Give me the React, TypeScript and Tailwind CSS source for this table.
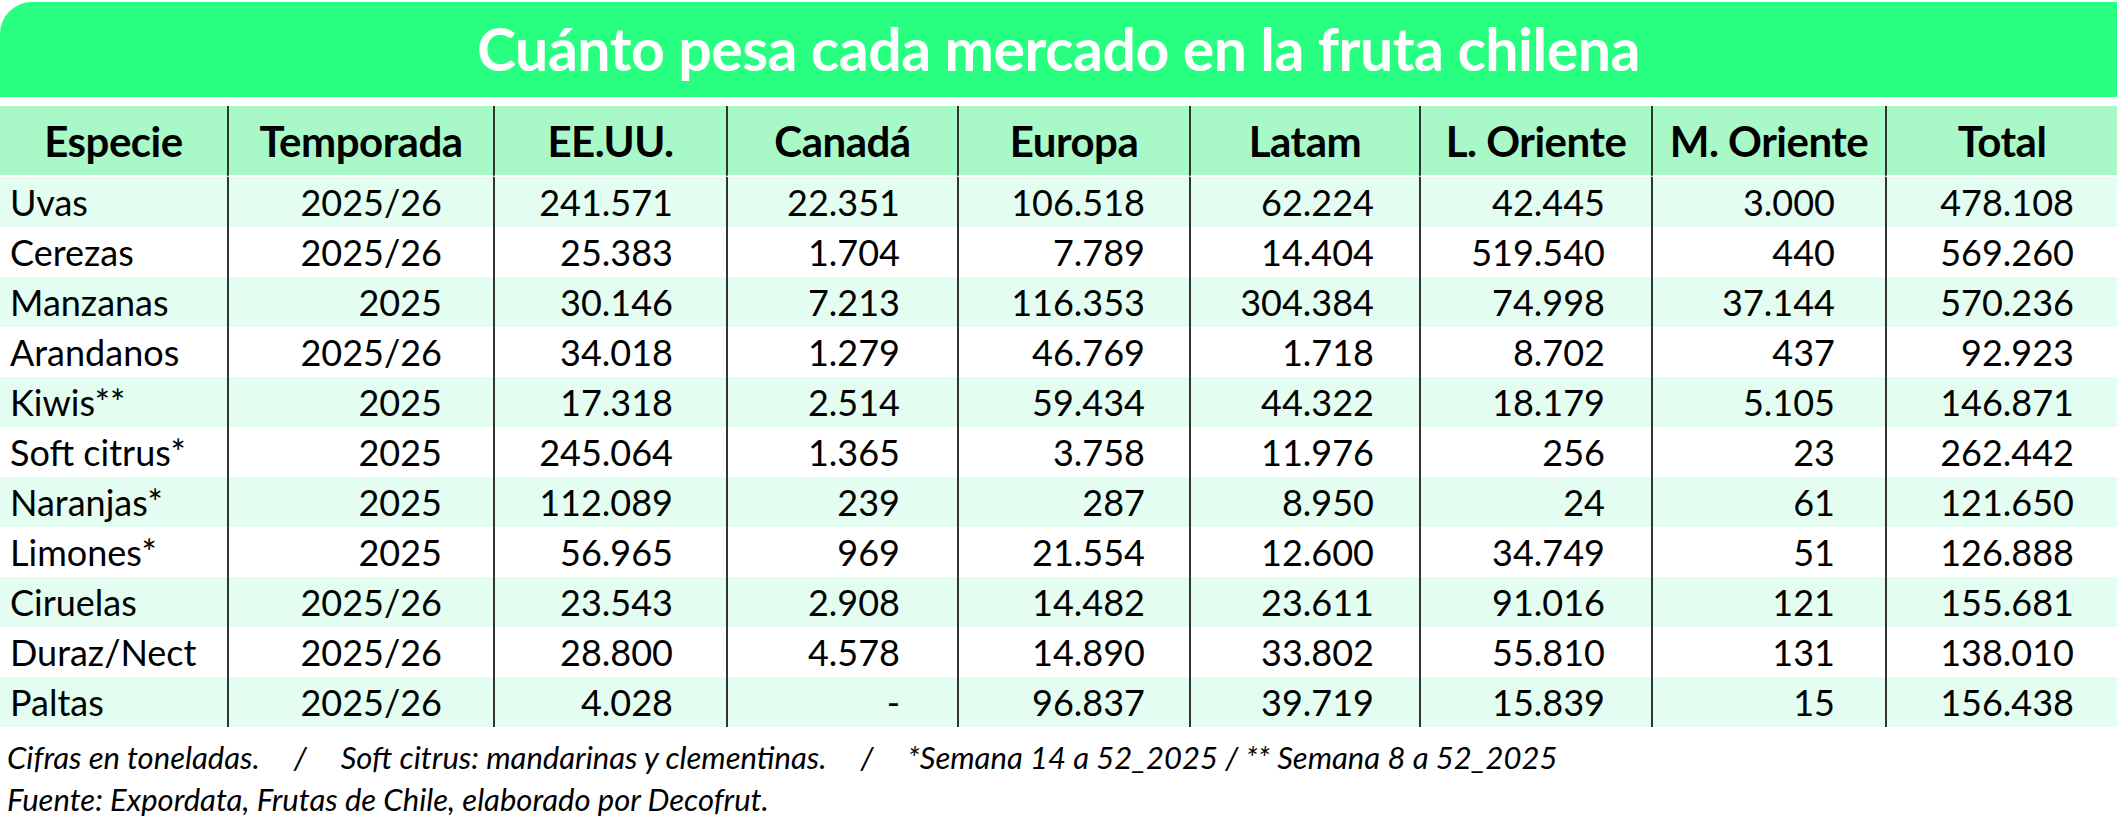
import React from "react";

const headers = ["Especie", "Temporada", "EE.UU.", "Canadá", "Europa", "Latam", "L. Oriente", "M. Oriente", "Total"];

const rows: string[][] = [
  ["Uvas", "2025/26", "241.571", "22.351", "106.518", "62.224", "42.445", "3.000", "478.108"],
  ["Cerezas", "2025/26", "25.383", "1.704", "7.789", "14.404", "519.540", "440", "569.260"],
  ["Manzanas", "2025", "30.146", "7.213", "116.353", "304.384", "74.998", "37.144", "570.236"],
  ["Arandanos", "2025/26", "34.018", "1.279", "46.769", "1.718", "8.702", "437", "92.923"],
  ["Kiwis**", "2025", "17.318", "2.514", "59.434", "44.322", "18.179", "5.105", "146.871"],
  ["Soft citrus*", "2025", "245.064", "1.365", "3.758", "11.976", "256", "23", "262.442"],
  ["Naranjas*", "2025", "112.089", "239", "287", "8.950", "24", "61", "121.650"],
  ["Limones*", "2025", "56.965", "969", "21.554", "12.600", "34.749", "51", "126.888"],
  ["Ciruelas", "2025/26", "23.543", "2.908", "14.482", "23.611", "91.016", "121", "155.681"],
  ["Duraz/Nect", "2025/26", "28.800", "4.578", "14.890", "33.802", "55.810", "131", "138.010"],
  ["Paltas", "2025/26", "4.028", "-", "96.837", "39.719", "15.839", "15", "156.438"],
];

const padR = [
  "pl-[10px] justify-start",
  "pr-[51px] justify-end",
  "pr-[53px] justify-end",
  "pr-[57px] justify-end",
  "pr-[44px] justify-end",
  "pr-[45px] justify-end",
  "pr-[46px] justify-end",
  "pr-[50px] justify-end",
  "pr-[43px] justify-end",
];

export default function App() {
  return (
    <div className="w-[2119px] h-[818px] bg-white text-black font-['Lato',sans-serif] overflow-hidden">
      <div className="w-[2117px] pt-[2px]">
        <div className="h-[95px] bg-[#28fe80] rounded-tl-[32px] flex items-center justify-center">
          <h1 className="text-white font-bold text-[59px] leading-none tracking-[-0.5px] pb-[2px]">
            Cuánto pesa cada mercado en la fruta chilena
          </h1>
        </div>
        <div className="h-[9px]" />
        <div className="grid grid-cols-[227px_266px_233px_231px_232px_230px_232px_234px_232px]">
          {headers.map((h, i) => (
            <div
              key={h}
              className={`h-[71px] border-b-[2px] border-b-white bg-[#a9f8c8] flex items-center justify-center font-bold text-[42px] leading-none tracking-[-0.5px] ${
                i > 0 ? "border-l-2 border-l-[#333]" : ""
              }`}
            >
              {h}
            </div>
          ))}
          {rows.map((r, ri) =>
            r.map((c, ci) => (
              <div
                key={`${ri}-${ci}`}
                className={`h-[50px] flex items-center text-[36px] leading-none ${padR[ci]} ${
                  ri % 2 === 0 ? "bg-[#e3fdf0]" : "bg-white"
                } ${ci > 0 ? "border-l-2 border-l-[#333]" : ""}`}
              >
                {c}
              </div>
            ))
          )}
        </div>
        <div className="pl-[7px] pt-[9px] italic text-[31px] leading-[42px]">
          <div className="flex gap-[34px]">
            <span>Cifras en toneladas.</span>
            <span>/</span>
            <span>Soft citrus: mandarinas y clementinas.</span>
            <span>/</span>
            <span>*Semana 14 a 52_2025 / ** Semana 8 a 52_2025</span>
          </div>
          <div>Fuente: Expordata, Frutas de Chile, elaborado por Decofrut.</div>
        </div>
      </div>
    </div>
  );
}
